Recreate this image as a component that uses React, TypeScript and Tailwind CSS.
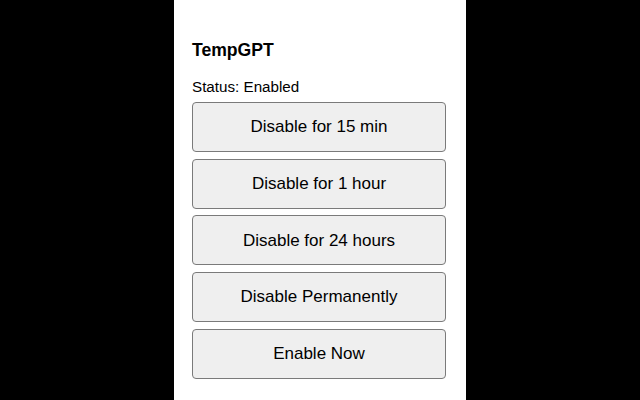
const options = [
  'Disable for 15 min',
  'Disable for 1 hour',
  'Disable for 24 hours',
  'Disable Permanently',
  'Enable Now',
];

const App = () => {
  return (
    <div className="h-[400px] w-[640px] bg-black flex justify-center font-['Liberation_Sans',Arial,sans-serif]">
      <section className="w-[292px] h-full bg-white pt-[40px] pl-[18px] pr-[20px] flex flex-col">
        <h1 className="text-[17.6px] font-bold leading-[20px] text-black">TempGPT</h1>
        <p className="mt-[18px] text-[15.2px] leading-[17px] text-black">Status: Enabled</p>
        <ul className="mt-[7px] flex flex-col gap-[6.7px]">
          {options.map((label) => (
            <li key={label}>
              <button className="w-full h-[50px] rounded-[4px] border border-[#7a7a7a] bg-[#efefef] text-[17px] text-black">
                {label}
              </button>
            </li>
          ))}
        </ul>
      </section>
    </div>
  );
};

export default App;
